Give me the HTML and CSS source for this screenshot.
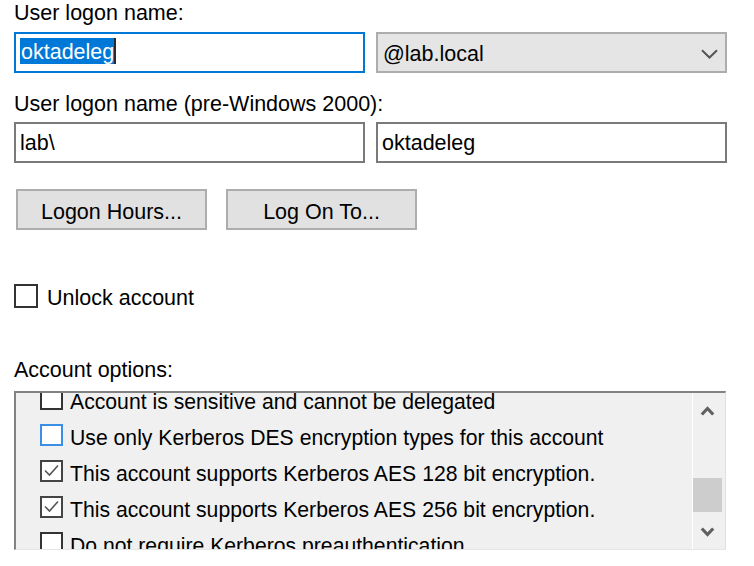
FILE: index.html
```html
<!DOCTYPE html>
<html>
<head>
<meta charset="utf-8">
<link rel="stylesheet" href="styles.css">
</head>
<body>
<div class="page">
  <div class="label">User logon name:</div>
  <div class="row row-1">
    <div class="field focused"><span class="sel">oktadeleg</span></div>
    <div class="combo">
      <span>@lab.local</span>
      <svg class="combo-chev" width="17" height="10" viewBox="0 0 17 10"><polyline points="1,1.2 8.5,8.5 16,1.2" fill="none" stroke="#555" stroke-width="2"/></svg>
    </div>
  </div>
  <div class="label label-2">User logon name (pre-Windows 2000):</div>
  <div class="row row-2">
    <div class="field">lab\</div>
    <div class="field">oktadeleg</div>
  </div>
  <div class="buttons">
    <div class="btn">Logon Hours...</div>
    <div class="btn">Log On To...</div>
  </div>
  <div class="check-row">
    <span class="box big"></span>
    <span class="txt">Unlock account</span>
  </div>
  <div class="label label-3">Account options:</div>
  <div class="list">
    <div class="items">
      <div class="items-inner">
        <div class="item"><span class="box"></span><span class="txt">Account is sensitive and cannot be delegated</span></div>
        <div class="item"><span class="box focus"></span><span class="txt">Use only Kerberos DES encryption types for this account</span></div>
        <div class="item"><span class="box checked"><svg width="19" height="18" viewBox="0 0 19 18"><polyline points="3,8.5 7.5,13 16,3.5" fill="none" stroke="#555" stroke-width="1.6"/></svg></span><span class="txt">This account supports Kerberos AES 128 bit encryption.</span></div>
        <div class="item"><span class="box checked"><svg width="19" height="18" viewBox="0 0 19 18"><polyline points="3,8.5 7.5,13 16,3.5" fill="none" stroke="#555" stroke-width="1.6"/></svg></span><span class="txt">This account supports Kerberos AES 256 bit encryption.</span></div>
        <div class="item"><span class="box"></span><span class="txt">Do not require Kerberos preauthentication</span></div>
      </div>
    </div>
    <div class="scrollbar">
      <div class="sb-btn"><svg width="15" height="10" viewBox="0 0 15 10"><polyline points="1.8,8.5 7.5,2.5 13.2,8.5" fill="none" stroke="#606060" stroke-width="3.2"/></svg></div>
      <div class="sb-track"><div class="sb-thumb"></div></div>
      <div class="sb-btn"><svg width="15" height="10" viewBox="0 0 15 10"><polyline points="1.8,1.5 7.5,7.5 13.2,1.5" fill="none" stroke="#606060" stroke-width="3.2"/></svg></div>
    </div>
  </div>
</div>
</body>
</html>
```
FILE: styles.css
```css
html, body {
  margin: 0;
  background: #fff;
}
body {
  font-family: "Liberation Sans", Arial, sans-serif;
  font-size: 21.5px;
  line-height: 26px;
  color: #000;
}
.page {
  width: 713px;
  padding-left: 14px;
}
.label {
  height: 26px;
  white-space: nowrap;
}
.label-2 { margin-top: 18px; }
.label-3 { margin-top: 48px; }
.row {
  display: flex;
  gap: 11px;
}
.row-1 { margin-top: 6px; }
.row-2 { margin-top: 5px; }
.field, .combo {
  box-sizing: border-box;
  width: 351px;
  height: 41px;
  border: 2px solid #7a7a7a;
  padding: 5px 0 0 4px;
  background: #fff;
  white-space: nowrap;
}
.row-2 .field { padding-top: 6px; }
.field.focused { border-color: #0078d7; }
.sel {
  background: #0078d7;
  color: #fff;
  padding: 2px 0 0 1px;
  border-right: 2px solid #2a2a2a;
}
.combo {
  background: #e5e5e5;
  border-color: #adadad;
  display: flex;
  justify-content: space-between;
  align-items: flex-start;
  padding: 7px 7px 0 5px;
}
.combo-chev { margin-top: 8px; }
.buttons {
  display: flex;
  gap: 19px;
  margin: 26px 0 0 2px;
}
.btn {
  box-sizing: border-box;
  width: 191px;
  height: 41px;
  border: 2px solid #adadad;
  background: #e1e1e1;
  display: flex;
  align-items: center;
  justify-content: center;
  padding-top: 4px;
}
.check-row {
  display: flex;
  align-items: center;
  gap: 9px;
  height: 26px;
  margin-top: 53px;
}
.txt { padding-top: 4px; }
.box {
  box-sizing: border-box;
  width: 23px;
  height: 22px;
  border: 2px solid #333;
  flex: none;
  display: inline-flex;
  background: #fff;
}
.box.big {
  width: 24px;
  height: 24px;
}
.box.focus { border-color: #3a8ee6; }
.box.checked { border-color: #444; }
.list {
  box-sizing: border-box;
  margin-top: 8px;
  width: 712px;
  height: 159px;
  border-top: 2px solid #828282;
  border-left: 2px solid #828282;
  border-right: 1px solid #e0e0e0;
  border-bottom: 1px solid #e6e6e6;
  background: #f0f0f0;
  display: flex;
  overflow: hidden;
}
.items {
  flex: 1;
  overflow: hidden;
  padding-left: 24px;
  font-size: 21.2px;
}
.items-inner { margin-top: -12px; }
.item {
  height: 36px;
  display: flex;
  align-items: center;
  gap: 7px;
  white-space: nowrap;
}
.item .txt { padding-top: 5px; }
.scrollbar {
  flex: none;
  width: 33px;
  box-sizing: border-box;
  border-left: 1px solid #fff;
  padding-right: 3px;
  background: #f0f0f0;
  display: flex;
  flex-direction: column;
}
.sb-btn {
  height: 36px;
  display: flex;
  align-items: center;
  justify-content: center;
}
.sb-btn:last-child { height: 34px; }
.sb-track { flex: 1; }
.sb-thumb {
  margin-top: 49px;
  height: 34px;
  background: #cdcdcd;
}
```
